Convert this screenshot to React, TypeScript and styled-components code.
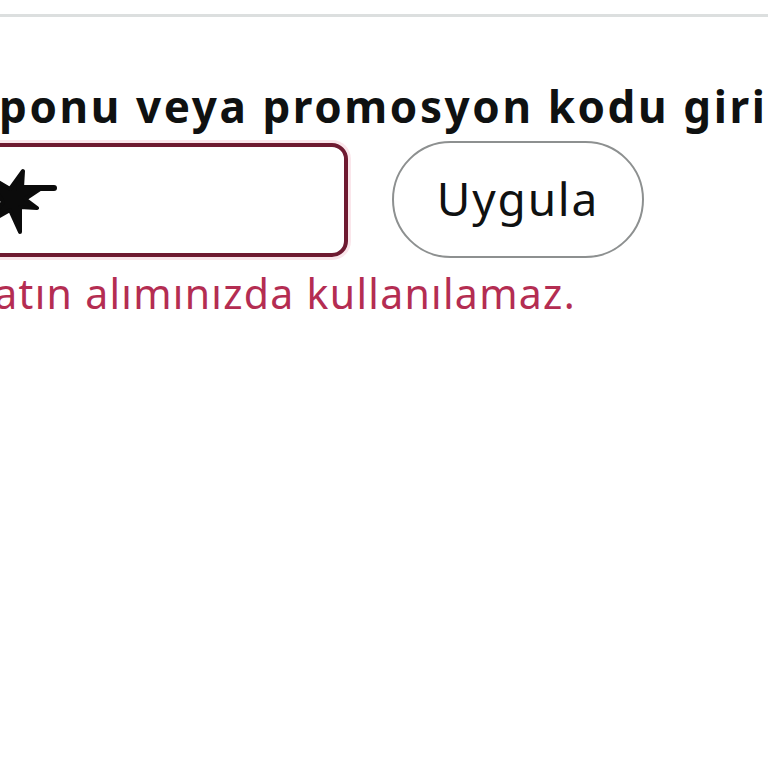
import styled, { createGlobalStyle } from "styled-components";

const GlobalStyle = createGlobalStyle`
	html, body {
		margin: 0;
		padding: 0;
		background: #ffffff;
		overflow: hidden;
	}
	body {
		font-family: "Noto Sans", "Open Sans", Arial, sans-serif;
		color: #0f1111;
	}
`;

const Page = styled.div`
	width: 768px;
	height: 768px;
	overflow: hidden;
	padding-top: 14px;
	box-sizing: border-box;
`;

const Divider = styled.div`
	height: 3px;
	background: #dcdfdf;
`;

const Panel = styled.section`
	margin-left: -60px;
	padding-top: 64px;
	display: flex;
	flex-direction: column;
`;

const Heading = styled.label`
	display: block;
	font-size: 44px;
	font-weight: 700;
	line-height: 50px;
	white-space: nowrap;
	letter-spacing: 2.6px;
	text-indent: -4px;
`;

const Row = styled.div`
	display: flex;
	align-items: center;
	gap: 44px;
	margin-top: 10px;
`;

const Field = styled.div<{ invalid?: boolean }>`
	width: 408px;
	height: 114px;
	box-sizing: border-box;
	border: 4px solid ${(p) => (p.invalid ? "#6f1a31" : "#888c8c")};
	border-radius: 16px;
	box-shadow: ${(p) =>
		p.invalid ? "0 0 0 3px rgba(204, 12, 57, 0.1)" : "none"};
	display: flex;
	align-items: center;
	padding-left: 36px;
`;

const Mask = styled.svg`
	width: 80px;
	height: 70px;
	flex: none;
`;

const ApplyButton = styled.button`
	width: 252px;
	height: 117px;
	border: 2px solid #8d9090;
	border-radius: 60px;
	background: #ffffff;
	font-family: "Noto Sans", "Open Sans", Arial, sans-serif;
	font-size: 46px;
	letter-spacing: 1.8px;
	color: #0f1111;
	padding: 0 0 4px;
	cursor: pointer;
`;

const ErrorText = styled.p`
	margin: 10px 0 0;
	font-size: 41px;
	line-height: 50px;
	letter-spacing: 1.3px;
	color: #b42d52;
	white-space: nowrap;
	text-indent: -121px;
`;

export default function App() {
	return (
		<>
			<GlobalStyle />
			<Page>
				<Divider />
				<Panel>
					<Heading>Kuponu veya promosyon kodu girin</Heading>
					<Row>
						<Field invalid>
							<Mask viewBox="0 0 80 70">
								<polygon
									points="43,6 42,23 60,24 45,34 57,43 40,42 40,67 30,45 9,57 23,37 6,10 30,24"
									fill="#0b0b0b"
									stroke="#0b0b0b"
									strokeWidth="4"
									strokeLinejoin="round"
								/>
								<rect x="36" y="20" width="41" height="6" rx="3" fill="#0b0b0b" />
							</Mask>
						</Field>
						<ApplyButton>Uygula</ApplyButton>
					</Row>
					<ErrorText>Bu kod satın alımınızda kullanılamaz.</ErrorText>
				</Panel>
			</Page>
		</>
	);
}
